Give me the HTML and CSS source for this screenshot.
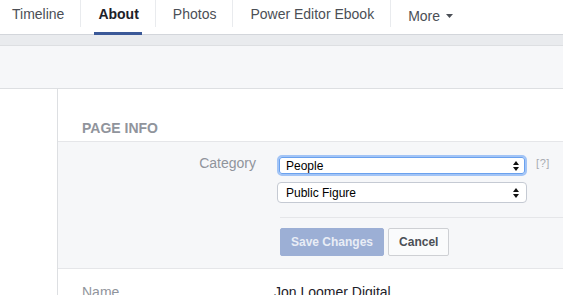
FILE: index.html
```html
<!DOCTYPE html>
<html lang="en">
<head>
  <meta charset="UTF-8" />
  <meta name="viewport" content="width=device-width, initial-scale=1.0"/>
  <title>About - Page Info</title>
  <link rel="stylesheet" href="styles.css">
</head>
<body>
  <nav class="tabs">
    <a class="tab" href="#">Timeline</a>
    <a class="tab active" href="#">About</a>
    <a class="tab" href="#">Photos</a>
    <a class="tab" href="#">Power Editor Ebook</a>
    <a class="tab more" href="#">More
      <svg class="caret" width="7" height="4" viewBox="0 0 7 4"><polygon points="0,0 7,0 3.5,4" /></svg>
    </a>
  </nav>
  <div class="band"></div>
  <div class="cover"></div>

  <main class="layout">
    <aside class="side"></aside>

    <section class="content">
      <h2 class="section-title">PAGE INFO</h2>

      <form class="edit-block">
        <div class="field">
          <label class="field-label" for="category">Category</label>
          <div class="field-controls">
            <div class="select-wrap">
              <select id="category" class="select is-focused">
                <option>People</option>
              </select>
              <svg class="arrows" width="6" height="10" viewBox="0 0 6 10"><polygon points="0,4 3,0 6,4" /><polygon points="0,6 6,6 3,10" /></svg>
            </div>
            <div class="select-wrap">
              <select class="select">
                <option>Public Figure</option>
              </select>
              <svg class="arrows" width="6" height="10" viewBox="0 0 6 10"><polygon points="0,4 3,0 6,4" /><polygon points="0,6 6,6 3,10" /></svg>
            </div>
          </div>
          <span class="help">[?]</span>
        </div>

        <div class="actions">
          <button class="btn btn-primary" type="button" disabled>Save Changes</button>
          <button class="btn" type="button">Cancel</button>
        </div>
      </form>

      <div class="info-row">
        <span class="info-label">Name</span>
        <span class="info-value">Jon Loomer Digital</span>
      </div>
    </section>
  </main>
</body>
</html>
```

FILE: styles.css
```css
body {
  margin: 0;
  font-family: "Liberation Sans", Arial, Helvetica, sans-serif;
  background: #fff;
  color: #1d2129;
  overflow: hidden;
}

/* top tabs */
.tabs {
  display: flex;
  height: 34px;
  background: #fff;
  border-bottom: 1px solid #d3d6db;
}

.tab {
  position: relative;
  display: flex;
  align-items: center;
  gap: 6px;
  height: 27px;
  padding: 0 16px 0 17px;
  font-size: 14px;
  color: #4b4f56;
  text-decoration: none;
  white-space: nowrap;
  border-right: 1px solid #e9ebee;
}

.tab:first-child {
  padding-left: 12px;
}

.tab.more {
  border-right: none;
  padding-top: 2px;
}

.caret {
  fill: #4b4f56;
}

.tab.active {
  font-weight: bold;
  color: #1d2129;
}

.tab.active::after {
  content: "";
  position: absolute;
  left: 13px;
  right: 13px;
  bottom: -8px;
  height: 3px;
  background: #3b5998;
}

.band {
  height: 10px;
  background: #e9ebee;
  border-bottom: 1px solid #dddfe2;
}

.cover {
  height: 42px;
  background: #f6f7f9;
  border-bottom: 1px solid #dddfe2;
}

/* main area */
.layout {
  display: flex;
}

.side {
  width: 57px;
  flex-shrink: 0;
  border-right: 1px solid #dddfe2;
  min-height: 220px;
}

.content {
  flex: 1;
}

.section-title {
  box-sizing: border-box;
  height: 53px;
  margin: 0;
  padding: 31px 24px 0;
  font-size: 14px;
  line-height: 16px;
  font-weight: bold;
  color: #90949c;
  border-bottom: 1px solid #e5e6e9;
}

.edit-block {
  margin: 0;
  padding: 13px 0 12px;
  background: #f6f7f9;
  border-bottom: 1px solid #e5e6e9;
}

.field {
  display: flex;
  align-items: flex-start;
}

.field-label {
  box-sizing: border-box;
  width: 198px;
  text-align: right;
  font-size: 14px;
  line-height: 16px;
  color: #90949c;
}

.field-controls {
  display: flex;
  flex-direction: column;
  gap: 6px;
  width: 250px;
  margin-left: 21px;
}

.select-wrap {
  position: relative;
}

.select {
  -webkit-appearance: none;
  appearance: none;
  box-sizing: border-box;
  display: block;
  width: 100%;
  height: 21px;
  margin: 0;
  padding: 0 20px 0 8px;
  font-family: inherit;
  font-size: 12px;
  color: #000;
  background: #fff;
  border: 1px solid #c5cad3;
  border-radius: 4px;
  outline: none;
}

.select.is-focused {
  padding-left: 7px;
  border: 2px solid #a2c4f6;
  box-shadow: inset 0 0 0 1px #6aa1ee;
  border-radius: 5px;
}

.arrows {
  position: absolute;
  right: 8px;
  top: 6px;
  fill: #111;
  pointer-events: none;
}

.help {
  margin-left: 9px;
  padding-top: 1px;
  font-size: 11px;
  line-height: 14px;
  letter-spacing: 0.6px;
  color: #a7abb1;
}

.actions {
  display: flex;
  gap: 4px;
  margin: 14px 0 0 222px;
  padding-top: 10px;
  border-top: 1px solid #e5e6e9;
}

.btn {
  height: 28px;
  padding: 0 10px;
  font-family: inherit;
  font-size: 12px;
  font-weight: bold;
  color: #4b4f56;
  background: #fafbfc;
  border: 1px solid #ced0d4;
  border-radius: 2px;
  cursor: pointer;
}

.btn-primary {
  color: #e9edf5;
  background: #9cafd5;
  border-color: #9cafd5;
  cursor: default;
}

.info-row {
  display: flex;
  padding: 14px 0 0 24px;
  font-size: 14px;
  line-height: 18px;
}

.info-label {
  width: 192px;
  color: #90949c;
}

.info-value {
  color: #1d2129;
}
```
